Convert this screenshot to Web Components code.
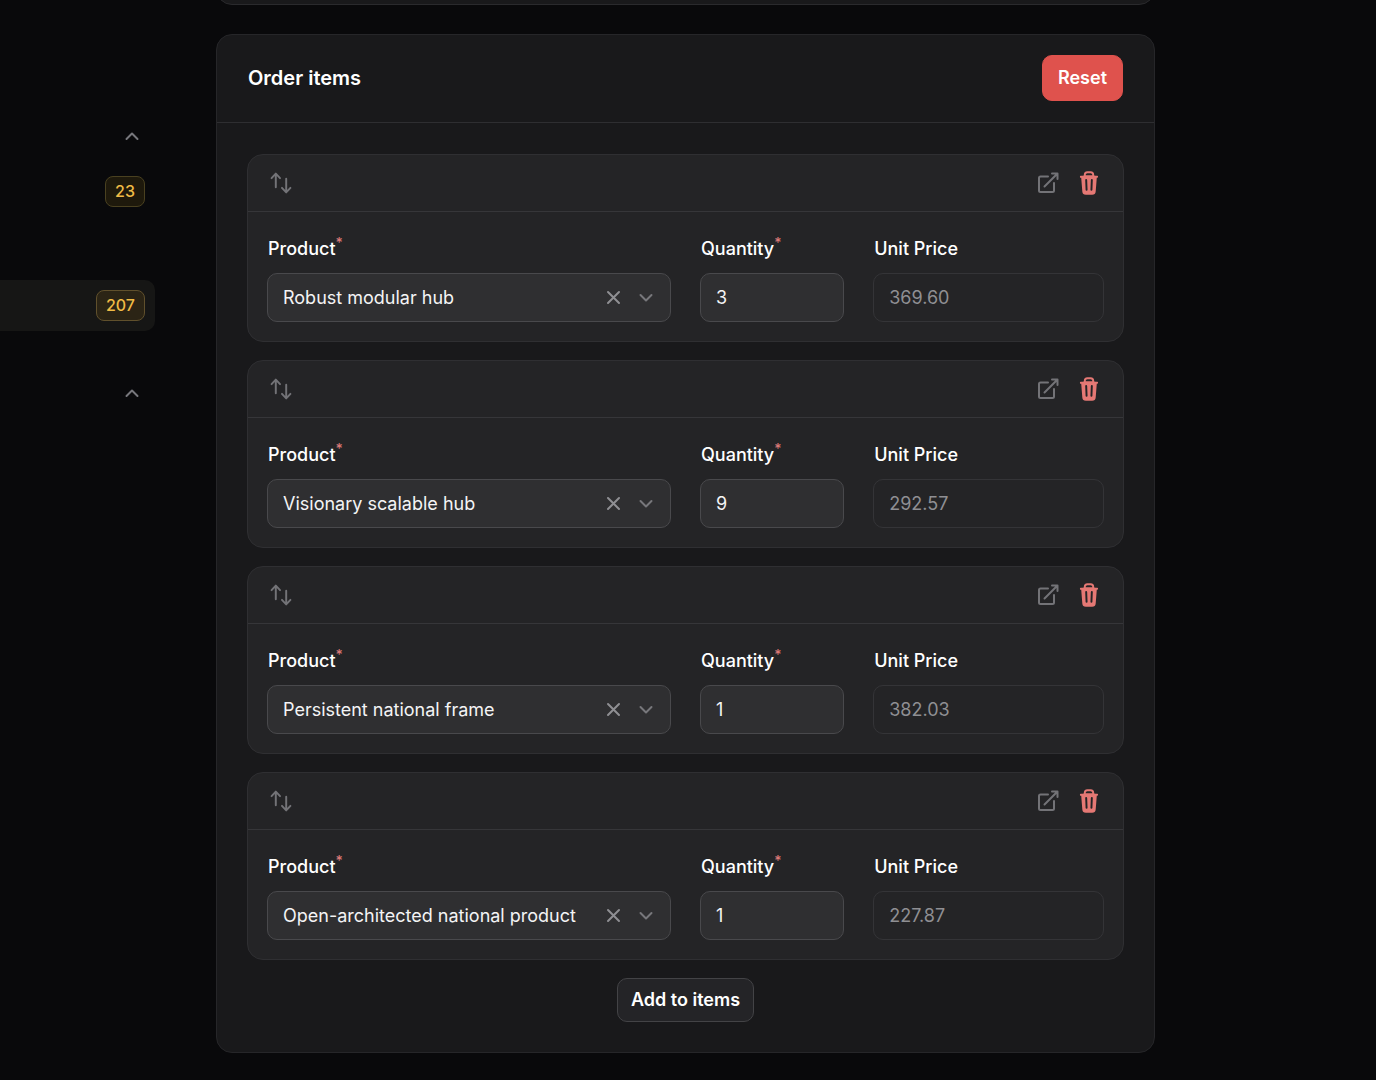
<!DOCTYPE html>
<html lang="en">
<head>
  <meta charset="utf-8">
  <meta name="viewport" content="width=device-width, initial-scale=1">
  <title>Order items</title>
  <style>
    body {
      margin: 0;
      background: #09090b;
      color: #fff;
      font-family: Inter, "Noto Sans", sans-serif;
      font-size: 18px;
      line-height: 24px;
    }
  </style>
</head>
<body>
  <order-page></order-page>

  <script>
    const icons = {
      sort: '<svg viewBox="0 0 20 20" fill="currentColor"><path d="M2.24 6.8a.75.75 0 0 0 1.06-.04l1.95-2.1v8.59a.75.75 0 0 0 1.5 0V4.66l1.95 2.1a.75.75 0 1 0 1.1-1.02l-3.25-3.5a.75.75 0 0 0-1.1 0L2.2 5.74a.75.75 0 0 0 .04 1.06Zm8 6.4a.75.75 0 0 0-.04 1.06l3.25 3.5a.75.75 0 0 0 1.1 0l3.25-3.5a.75.75 0 1 0-1.1-1.02l-1.95 2.1V6.75a.75.75 0 0 0-1.5 0v8.59l-1.95-2.1a.75.75 0 0 0-1.06-.04Z"/></svg>',
      open: '<svg viewBox="0 0 26 26" fill="none" stroke="currentColor" stroke-width="2" stroke-linecap="round" stroke-linejoin="round"><path d="M13 6.500H5.500A1.500 1.500 0 0 0 4 8v12.500A1.500 1.500 0 0 0 5.500 22H17.500A1.500 1.500 0 0 0 19 20.500V13M9.500 16.500L22.500 3.500M17 3.500h5.500V9"/></svg>',
      trash: '<svg viewBox="0 0 20 20" fill="currentColor"><path fill-rule="evenodd" d="M8.75 1A2.75 2.75 0 0 0 6 3.75v.443c-.795.077-1.584.176-2.365.298a.75.75 0 1 0 .23 1.482l.149-.022.841 10.518A2.75 2.75 0 0 0 7.596 19h4.807a2.75 2.75 0 0 0 2.742-2.53l.841-10.52.149.023a.75.75 0 0 0 .23-1.482A41.03 41.03 0 0 0 14 4.193V3.75A2.75 2.75 0 0 0 11.25 1h-2.5ZM10 4c.84 0 1.673.025 2.5.075V3.75c0-.69-.56-1.25-1.25-1.25h-2.5c-.69 0-1.25.56-1.25 1.25v.325C8.327 4.025 9.16 4 10 4ZM8.58 7.72a.75.75 0 0 0-1.5.06l.3 7.5a.75.75 0 1 0 1.5-.06l-.3-7.5Zm4.34.06a.75.75 0 1 0-1.5-.06l-.3 7.5a.75.75 0 1 0 1.5.06l.3-7.5Z"/></svg>',
      clear: '<svg viewBox="0 0 16 16" fill="none" stroke="currentColor" stroke-width="2" stroke-linecap="round"><path d="M3 2l11 11M14 2L3 13"/></svg>',
      down: '<svg viewBox="0 0 16 16" fill="none" stroke="currentColor" stroke-width="2" stroke-linecap="round" stroke-linejoin="round"><path d="M2.500 5l5.500 5.500L13.500 5"/></svg>',
      up: '<svg viewBox="0 0 14 14" fill="none" stroke="currentColor" stroke-width="2" stroke-linecap="round" stroke-linejoin="round"><path d="M1.500 10L7 4.500l5.500 5.500"/></svg>',
    };

    const orderItems = [
      { product: 'Robust modular hub', quantity: 3, price: '369.60' },
      { product: 'Visionary scalable hub', quantity: 9, price: '292.57' },
      { product: 'Persistent national frame', quantity: 1, price: '382.03' },
      { product: 'Open-architected national product', quantity: 1, price: '227.87' },
    ];

    class NavLink extends HTMLElement {
      connectedCallback() {
        const badge = this.getAttribute('badge');
        this.attachShadow({ mode: 'open' }).innerHTML = `
          <style>
            :host {
              display: block;
            }

            a {
              display: flex;
              align-items: center;
              justify-content: flex-end;
              box-sizing: border-box;
              height: 51px;
              padding-right: 10px;
              border-radius: 0 10px 10px 0;
              color: #fbbf24;
              text-decoration: none;
            }

            :host([active]) a {
              background: #161615;
            }

            span {
              padding: 3px 9px;
              border: 1px solid #4a4120;
              border-radius: 8px;
              background: #1e190c;
              color: #f0bb45;
              font-size: 16px;
              font-weight: 500;
              line-height: 23px;
            }

            :host([active]) span {
              border-color: #60502c;
              background: #2b2415;
            }
          </style>
          <a href="#" aria-label="${this.getAttribute('label')}">${badge ? `<span>${badge}</span>` : ''}</a>
        `;
      }
    }

    class NavGroup extends HTMLElement {
      connectedCallback() {
        this.attachShadow({ mode: 'open' }).innerHTML = `
          <style>
            :host {
              display: flex;
              flex-direction: column;
              gap: 6px;
            }

            button {
              display: flex;
              align-items: center;
              justify-content: flex-end;
              height: 49px;
              padding: 0 16px 0 0;
              border: 0;
              background: none;
              color: #77777c;
            }

            svg {
              width: 14px;
              height: 14px;
            }
          </style>
          <button type="button" aria-label="${this.getAttribute('label')}">${icons.up}</button>
          <slot></slot>
        `;
      }
    }

    class PageSection extends HTMLElement {
      connectedCallback() {
        this.attachShadow({ mode: 'open' }).innerHTML = `
          <style>
            :host {
              display: block;
              border: 1px solid #262629;
              border-radius: 16px;
              background: #19191b;
            }

            header {
              display: flex;
              align-items: center;
              justify-content: space-between;
              padding: 20px 31px 21px;
              border-bottom: 1px solid #2e2e31;
            }

            h2 {
              margin: 0;
              font-size: 20px;
              font-weight: 600;
              font-optical-sizing: none;
              line-height: 28px;
            }

            .body {
              padding: 31px 30px 30px;
            }
          </style>
          <header>
            <h2>${this.getAttribute('heading')}</h2>
            <slot name="action"></slot>
          </header>
          <div class="body"><slot></slot></div>
        `;
      }
    }

    class UiButton extends HTMLElement {
      connectedCallback() {
        this.attachShadow({ mode: 'open' }).innerHTML = `
          <style>
            :host {
              display: block;
            }

            button {
              display: block;
              padding: 9px 13px;
              border: 1px solid #434346;
              border-radius: 10px;
              background: #242427;
              color: #fff;
              font: 600 18px/24px Inter, "Noto Sans", sans-serif;
            }

            :host([color="danger"]) button {
              padding: 10px 15px;
              border-color: #df524d;
              background: #df524d;
            }
          </style>
          <button type="button"><slot></slot></button>
        `;
      }
    }

    class FormField extends HTMLElement {
      connectedCallback() {
        const value = this.getAttribute('value');
        this.attachShadow({ mode: 'open' }).innerHTML = `
          <style>
            :host {
              display: flex;
              flex-direction: column;
              gap: 12px;
              min-width: 0;
            }

            label {
              padding-left: 1px;
              font-weight: 500;
            }

            sup {
              color: #d97876;
              font-size: 14px;
              line-height: 0;
            }

            .box {
              display: flex;
              align-items: center;
              box-sizing: border-box;
              height: 49px;
              border: 1px solid #49494c;
              border-radius: 10px;
              background: #2f2f31;
            }

            :host([disabled]) .box {
              border-color: #343437;
              background: none;
            }

            input,
            select {
              flex: 1;
              box-sizing: border-box;
              width: 100%;
              min-width: 0;
              height: 100%;
              margin: 0;
              padding: 0 15px;
              border: 0;
              outline: 0;
              appearance: none;
              background: none;
              color: #f4f4f5;
              font: inherit;
            }

            select {
              padding-right: 0;
            }

            input:disabled {
              color: #8f8f93;
            }

            button {
              display: flex;
              padding: 8px;
              border: 0;
              background: none;
              color: #8f8f93;
            }

            svg {
              width: 16px;
              height: 16px;
            }

            .arrow {
              display: flex;
              padding: 0 16px 0 9px;
              color: #77777b;
            }
          </style>
          <label for="control">${this.getAttribute('label')}${this.hasAttribute('required') ? '<sup>*</sup>' : ''}</label>
          <div class="box">${this.control(value)}</div>
        `;
      }

      control(value) {
        if (this.getAttribute('type') === 'select') {
          return `
            <select id="control" required><option>${value}</option></select>
            <button type="button" aria-label="Clear">${icons.clear}</button>
            <span class="arrow">${icons.down}</span>
          `;
        }
        return `<input id="control" type="text" inputmode="decimal" value="${value}" ${this.hasAttribute('disabled') ? 'disabled' : ''}>`;
      }
    }

    class OrderItem extends HTMLElement {
      set item(item) {
        this._item = item;
        this.render();
      }

      render() {
        const root = this.shadowRoot || this.attachShadow({ mode: 'open' });
        root.innerHTML = `
          <style>
            :host {
              display: block;
              border: 1px solid #2f2f32;
              border-radius: 16px;
              background: #242426;
            }

            header {
              display: flex;
              align-items: center;
              gap: 15px;
              height: 56px;
              padding: 0 21px 0 20px;
              border-bottom: 1px solid #363639;
            }

            button {
              display: flex;
              padding: 0;
              border: 0;
              background: none;
              color: #737377;
            }

            .sort {
              margin-right: auto;
            }

            .delete {
              color: #e57874;
            }

            svg {
              width: 26px;
              height: 26px;
            }

            .fields {
              display: grid;
              grid-template-columns: repeat(10, 1fr);
              column-gap: 29px;
              padding: 25px 19px 19px;
            }

            .product {
              grid-column: span 5;
            }

            .quantity {
              grid-column: span 2;
            }

            .price {
              grid-column: span 3;
            }
          </style>
          <header>
            <button class="sort" type="button" aria-label="Move">${icons.sort}</button>
            <button type="button" aria-label="Open product">${icons.open}</button>
            <button class="delete" type="button" aria-label="Delete">${icons.trash}</button>
          </header>
          <div class="fields">
            <form-field class="product" type="select" label="Product" value="${this._item.product}" required></form-field>
            <form-field class="quantity" label="Quantity" value="${this._item.quantity}" required></form-field>
            <form-field class="price" label="Unit Price" value="${this._item.price}" disabled></form-field>
          </div>
        `;
      }
    }

    class OrderItemList extends HTMLElement {
      connectedCallback() {
        this.attachShadow({ mode: 'open' }).innerHTML = `
          <style>
            :host {
              display: flex;
              flex-direction: column;
              gap: 18px;
            }

            ui-button {
              align-self: center;
            }
          </style>
          <ui-button>Add to items</ui-button>
        `;
        const add = this.shadowRoot.querySelector('ui-button');
        orderItems.forEach((item) => {
          const row = document.createElement('order-item');
          row.item = item;
          this.shadowRoot.insertBefore(row, add);
        });
      }
    }

    class OrderPage extends HTMLElement {
      connectedCallback() {
        this.attachShadow({ mode: 'open' }).innerHTML = `
          <style>
            :host {
              display: grid;
              grid-template-columns: 155px minmax(0, 1fr);
              box-sizing: border-box;
              min-height: 100vh;
              overflow: hidden;
            }

            nav {
              display: flex;
              flex-direction: column;
              gap: 37px;
              padding-top: 111px;
            }

            main {
              display: flex;
              flex-direction: column;
              gap: 29px;
              padding: 0 221px 27px 61px;
            }

            /* details card, scrolled past the top edge */
            .details {
              box-sizing: border-box;
              height: 40px;
              margin-top: -35px;
              border: 1px solid #2a2a2d;
              border-radius: 16px;
              background: #19191b;
            }
          </style>
          <nav>
            <nav-group label="Shop">
              <nav-link label="Products" badge="23"></nav-link>
              <nav-link label="Customers"></nav-link>
              <nav-link label="Orders" badge="207" active></nav-link>
            </nav-group>
            <nav-group label="Blog"></nav-group>
          </nav>
          <main>
            <div class="details"></div>
            <page-section heading="Order items">
              <ui-button slot="action" color="danger">Reset</ui-button>
              <order-item-list></order-item-list>
            </page-section>
          </main>
        `;
      }
    }

    customElements.define('nav-link', NavLink);
    customElements.define('nav-group', NavGroup);
    customElements.define('page-section', PageSection);
    customElements.define('ui-button', UiButton);
    customElements.define('form-field', FormField);
    customElements.define('order-item', OrderItem);
    customElements.define('order-item-list', OrderItemList);
    customElements.define('order-page', OrderPage);
  </script>
</body>
</html>
